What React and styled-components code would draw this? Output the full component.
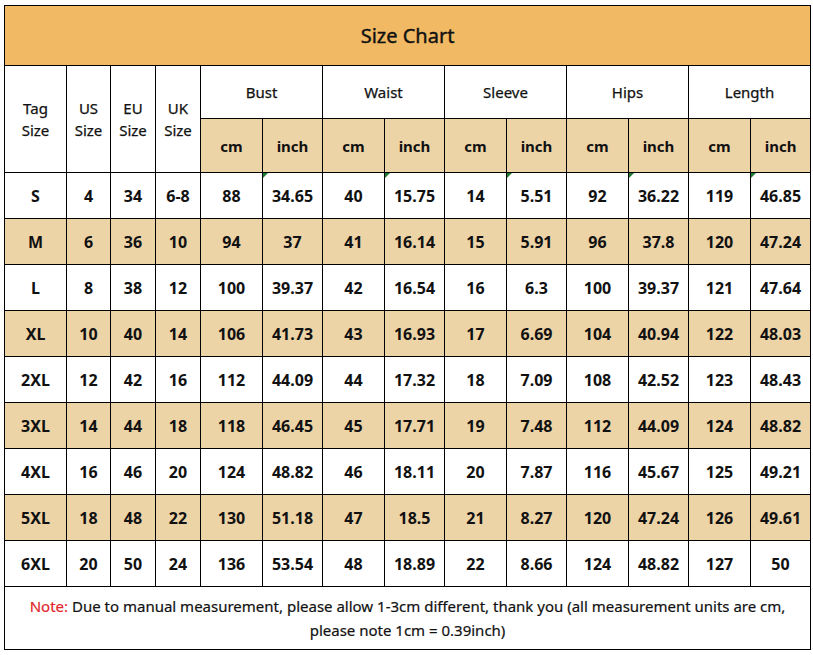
import React from "react";
import styled, { createGlobalStyle } from "styled-components";

const GlobalStyle = createGlobalStyle`
  html, body {
    margin: 0;
    background: #ffffff;
  }
  body {
    padding: 5px 0 0 4px;
    font-family: "Noto Sans", "Open Sans", Arial, sans-serif;
    color: #111;
  }
`;

const Table = styled.table`
  width: 806px;
  border-collapse: collapse;
  table-layout: fixed;
  border: 1.5px solid #000;
`;

const TitleCell = styled.th`
  height: 57px;
  background: #f1b964;
  border: 1.5px solid #000;
  font-size: 20px;
  font-weight: 400;
  -webkit-text-stroke: 0.4px #111;
  color: #111;
  text-align: center;
  vertical-align: middle;
`;

const HeadCell = styled.th`
  height: ${(p) => (p.$unit ? "53px" : "52px")};
  border: 1.5px solid #000;
  background: ${(p) => (p.$unit ? "#edd4a7" : "#fff")};
  font-size: 15px;
  font-weight: ${(p) => (p.$unit ? 700 : 400)};
  -webkit-text-stroke: ${(p) => (p.$unit ? "0" : "0.25px #111")};
  line-height: 22px;
  text-align: center;
  vertical-align: middle;
  padding: 0;
`;

const Row = styled.tr`
  height: 46px;
  background: ${(p) => (p.$shaded ? "#edd4a7" : "#fff")};
`;

const Cell = styled.td`
  position: relative;
  border: 1.5px solid #000;
  font-size: 16px;
  font-weight: 700;
  text-align: center;
  vertical-align: middle;
  padding: 0;

  &::before {
    content: "";
    display: ${(p) => (p.$flag ? "block" : "none")};
    position: absolute;
    top: 0;
    left: 0;
    border-top: 5px solid #1f7a34;
    border-right: 5px solid transparent;
  }
`;

const NoteCell = styled.td`
  height: 62px;
  border: 1.5px solid #000;
  font-size: 15px;
  line-height: 24px;
  -webkit-text-stroke: 0.2px #111;
  text-align: center;
  vertical-align: middle;
  padding: 0 10px;
`;

const NoteLabel = styled.span`
  color: #e0262c;
  -webkit-text-stroke: 0.2px #e0262c;
`;

const widths = [62, 44, 45, 45, 62, 60, 62, 60, 62, 60, 62, 60, 62, 60];
const groups = ["Bust", "Waist", "Sleeve", "Hips", "Length"];

const rows = [
  ["S", "4", "34", "6-8", "88", "34.65", "40", "15.75", "14", "5.51", "92", "36.22", "119", "46.85"],
  ["M", "6", "36", "10", "94", "37", "41", "16.14", "15", "5.91", "96", "37.8", "120", "47.24"],
  ["L", "8", "38", "12", "100", "39.37", "42", "16.54", "16", "6.3", "100", "39.37", "121", "47.64"],
  ["XL", "10", "40", "14", "106", "41.73", "43", "16.93", "17", "6.69", "104", "40.94", "122", "48.03"],
  ["2XL", "12", "42", "16", "112", "44.09", "44", "17.32", "18", "7.09", "108", "42.52", "123", "48.43"],
  ["3XL", "14", "44", "18", "118", "46.45", "45", "17.71", "19", "7.48", "112", "44.09", "124", "48.82"],
  ["4XL", "16", "46", "20", "124", "48.82", "46", "18.11", "20", "7.87", "116", "45.67", "125", "49.21"],
  ["5XL", "18", "48", "22", "130", "51.18", "47", "18.5", "21", "8.27", "120", "47.24", "126", "49.61"],
  ["6XL", "20", "50", "24", "136", "53.54", "48", "18.89", "22", "8.66", "124", "48.82", "127", "50"],
];

const App = () => {
  return (
    <>
      <GlobalStyle />
      <Table>
        <colgroup>
          {widths.map((w, i) => (
            <col key={i} style={{ width: w }} />
          ))}
        </colgroup>
        <thead>
          <tr>
            <TitleCell colSpan={14}>Size Chart</TitleCell>
          </tr>
          <tr>
            <HeadCell rowSpan={2}>Tag<br />Size</HeadCell>
            <HeadCell rowSpan={2}>US<br />Size</HeadCell>
            <HeadCell rowSpan={2}>EU<br />Size</HeadCell>
            <HeadCell rowSpan={2}>UK<br />Size</HeadCell>
            {groups.map((g) => (
              <HeadCell key={g} colSpan={2}>{g}</HeadCell>
            ))}
          </tr>
          <tr>
            {groups.map((g) => (
              <React.Fragment key={g}>
                <HeadCell $unit>cm</HeadCell>
                <HeadCell $unit>inch</HeadCell>
              </React.Fragment>
            ))}
          </tr>
        </thead>
        <tbody>
          {rows.map((r, ri) => (
            <Row key={r[0]} $shaded={ri % 2 === 1}>
              {r.map((v, ci) => (
                <Cell key={ci} $flag={ri === 0 && ci >= 5 && ci % 2 === 1}>
                  {v}
                </Cell>
              ))}
            </Row>
          ))}
          <tr>
            <NoteCell colSpan={14}>
              <NoteLabel>Note:</NoteLabel> Due to manual measurement, please allow 1-3cm different, thank you (all measurement units are cm, please note 1cm = 0.39inch)
            </NoteCell>
          </tr>
        </tbody>
      </Table>
    </>
  );
};

export default App;
